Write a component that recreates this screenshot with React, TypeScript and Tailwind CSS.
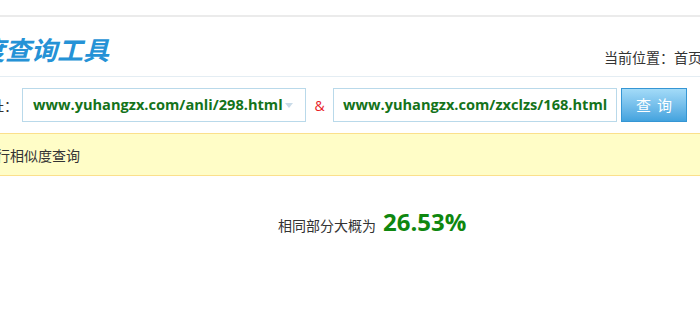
import React from "react";

const cjk = { fontFamily: '"Noto Sans CJK SC", "Noto Sans", sans-serif' };
const latin = { fontFamily: '"Open Sans", "Noto Sans CJK SC", sans-serif' };

function Arrow() {
  return (
    <svg width="8" height="5" viewBox="0 0 8 5" className="shrink-0">
      <path d="M0 0 L8 0 L4 5 Z" fill="#c9dbe8" />
    </svg>
  );
}

export default function App() {
  return (
    <div className="w-[700px] h-[326px] overflow-hidden bg-white" style={cjk}>
      <div className="h-[15px]" />
      <div className="h-[2px] bg-[#ebebeb]" />
      {/* header */}
      <div className="flex h-[60px] border-b border-[#e4edf3]">
        <div className="w-[604px] shrink-0">
          <div className="flex w-[109px] justify-end pt-[17px]">
            <span className="whitespace-nowrap text-[26px] leading-[30px] font-bold italic text-[#2592d6]">
              相似度查询工具
            </span>
          </div>
        </div>
        <div className="pt-[31px] whitespace-nowrap text-[14px] leading-[18px] text-[#333]">
          当前位置：首页 &gt; 相似度查询工具
        </div>
      </div>
      {/* form row */}
      <div className="flex items-center mt-[11px] h-[34px]">
        <div className="flex w-[22px] shrink-0 justify-end">
          <span className="whitespace-nowrap pr-[4px] text-[14px] leading-[18px] text-[#333]">
            网址：
          </span>
        </div>
        <div className="flex h-[34px] w-[284px] shrink-0 items-center border border-[#b9d9ea] bg-white pl-[10px] pr-[12px]">
          <span
            className="flex-1 whitespace-nowrap overflow-hidden text-[14.6px] font-bold text-[#14731a]"
            style={latin}
          >
            www.yuhangzx.com/anli/298.html
          </span>
          <Arrow />
        </div>
        <div className="w-[27px] shrink-0 text-center text-[14px] text-[#e8232a]" style={latin}>
          &amp;
        </div>
        <div className="flex h-[34px] w-[284px] shrink-0 items-center border border-[#b9d9ea] bg-white pl-[9px] pr-[9px]">
          <span
            className="flex-1 whitespace-nowrap overflow-hidden text-[14.6px] font-bold text-[#14731a]"
            style={latin}
          >
            www.yuhangzx.com/zxclzs/168.html
          </span>
        </div>
        <button
          className="ml-[4px] h-[34px] w-[66px] shrink-0 border border-[#3596d4] bg-gradient-to-b from-[#a3dbf8] to-[#43a3de] text-[15px] tracking-[6px] pl-[6px] text-white"
          style={cjk}
        >
          查询
        </button>
      </div>
      {/* notice bar */}
      <div className="mt-[11px] flex h-[43px] items-center border-y border-[#fbe08c] bg-[#fffdc7]">
        <div className="flex w-[80px] justify-end">
          <span className="whitespace-nowrap text-[14px] leading-[18px] text-[#333]">
            请输入网址进行相似度查询
          </span>
        </div>
      </div>
      {/* result */}
      <div className="mt-[28px] flex items-baseline pl-[278px]">
        <span className="text-[14px] text-[#333]">相同部分大概为</span>
        <span className="ml-[7px] text-[24px] font-bold text-[#0f870f]" style={latin}>
          26.53%
        </span>
      </div>
    </div>
  );
}
